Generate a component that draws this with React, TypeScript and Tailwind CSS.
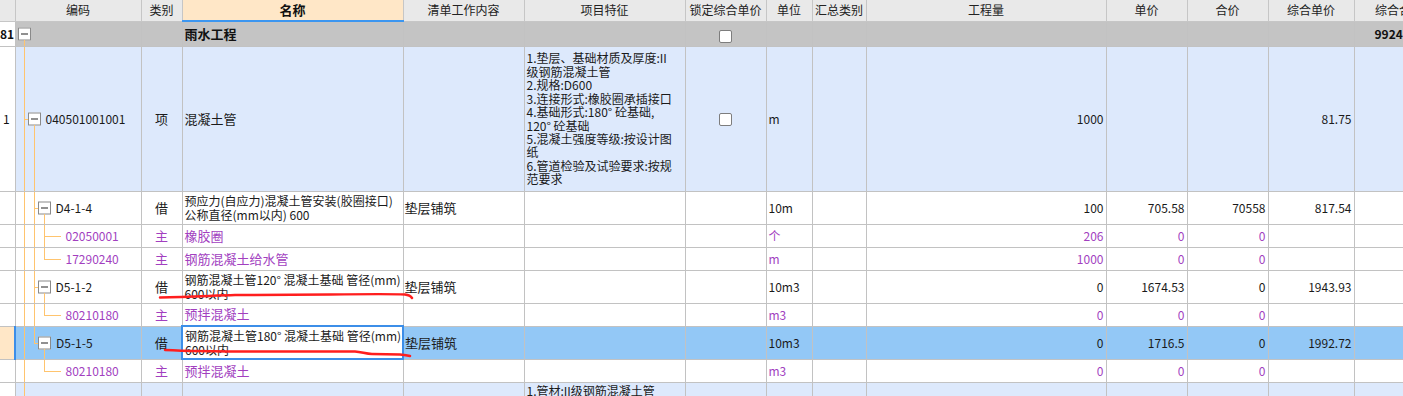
import React from "react";

const G = "border-r border-b border-[#c2c2c2]";
const PURPLE = "text-[#a23fbf]";

function VLine({ cls }: { cls: string }) {
  return <span className={"absolute w-px bg-[#ffc46e] " + cls} />;
}
function HLine({ cls }: { cls: string }) {
  return <span className={"absolute top-1/2 h-px bg-[#ffc46e] " + cls} />;
}
function Box({ cls }: { cls: string }) {
  return (
    <span
      className={
        "absolute top-1/2 -translate-y-1/2 w-[13px] h-[13px] border border-[#8a8a8a] bg-white flex items-center justify-center " +
        cls
      }
    >
      <span className="w-[7px] h-px bg-[#222]" />
    </span>
  );
}
function Check() {
  return <span className="inline-block w-[13px] h-[13px] border border-[#7d7d7d] bg-white rounded-[2px] align-middle" />;
}

function Header() {
  const h = "h-[21px] border-r border-b border-[#c6c6c6] bg-[#e9e9e9] text-[12px] leading-[14px] text-[#222] font-normal text-center whitespace-nowrap overflow-hidden p-0";
  return (
    <tr className="h-[21px]">
      <th className={h}></th>
      <th className={h}>编码</th>
      <th className={h}>类别</th>
      <th className="h-[21px] border-r border-[#c6c6c6] border-b-2 border-b-[#3c96f0] bg-[#ffe7c7] text-[13px] leading-[14px] text-[#111] font-bold text-center p-0">名称</th>
      <th className={h}>清单工作内容</th>
      <th className={h}>项目特征</th>
      <th className={h}>锁定综合单价</th>
      <th className={h}>单位</th>
      <th className={h}>汇总类别</th>
      <th className={h}>工程量</th>
      <th className={h}>单价</th>
      <th className={h}>合价</th>
      <th className={h}>综合单价</th>
      <th className={h}>综合合价</th>
    </tr>
  );
}

type RowProps = {
  h: string;
  bg: string;
  col0?: React.ReactNode;
  col0bg?: string;
  tree: React.ReactNode;
  code: React.ReactNode;
  codePad: string;
  kind?: string;
  name?: React.ReactNode;
  work?: string;
  feature?: React.ReactNode;
  lock?: boolean;
  unit?: string;
  qty?: string;
  price?: string;
  total?: string;
  uprice?: string;
  purple?: boolean;
  selected?: boolean;
};

function Row(p: RowProps) {
  const c = p.purple ? PURPLE : "text-[#1a1a1a]";
  const td = `${G} p-0 align-middle overflow-hidden whitespace-nowrap text-[12px] leading-[14px] ${c}`;
  return (
    <tr className={p.h}>
      <td className={`${G} p-0 align-middle overflow-hidden text-[12px] ${p.col0bg ?? "bg-white"}`}>{p.col0}</td>
      <td className={`${td} relative ${p.bg} ${p.selected ? "border-l-2 border-l-[#3c8ee8]" : ""}`}>
        {p.tree}
        <span className={`relative ${p.codePad}`}>{p.code}</span>
      </td>
      <td className={`${td} text-center text-[13px] ${p.bg}`}>{p.kind}</td>
      <td
        className={
          p.selected
            ? `p-0 align-middle overflow-hidden whitespace-nowrap text-[12px] leading-[14px] bg-white border-2 border-[#3c8ee8] ${c}`
            : `${td} ${p.bg}`
        }
      >
        <div className="pl-[2px]">{p.name}</div>
      </td>
      <td className={`${td} ${p.bg} text-[13px]`}>
        <div className="pl-[1px]">{p.work}</div>
      </td>
      <td className={`${td} ${p.bg}`}>
        <div className="pl-[2px]">{p.feature}</div>
      </td>
      <td className={`${td} ${p.bg} text-center`}>{p.lock ? <Check /> : null}</td>
      <td className={`${td} ${p.bg}`}>
        <div className="pl-[2px]">{p.unit}</div>
      </td>
      <td className={`${td} ${p.bg}`}></td>
      <td className={`${td} ${p.bg} text-right`}>
        <div className="pr-[2px]">{p.qty}</div>
      </td>
      <td className={`${td} ${p.bg} text-right`}>
        <div className="pr-[2px]">{p.price}</div>
      </td>
      <td className={`${td} ${p.bg} text-right`}>
        <div className="pr-[2px]">{p.total}</div>
      </td>
      <td className={`${td} ${p.bg} text-right`}>
        <div className="pr-[2px]">{p.uprice}</div>
      </td>
      <td className={`${td} ${p.bg}`}></td>
    </tr>
  );
}

const L1 = <VLine cls="left-[8px] top-0 bottom-0" />;
const L2 = <VLine cls="left-[18px] top-0 bottom-0" />;

export default function App() {
  const BLUE = "bg-[#dde9fc]";
  const W = "bg-white";
  const SEL = "bg-[#93c8f6]";
  const GR = `${G} p-0 bg-[#c4c4c4]`;
  return (
    <div className="relative w-[1403px] h-[396px] overflow-hidden bg-white font-['Noto_Sans_CJK_SC','Liberation_Sans',sans-serif]">
      <table className="table-fixed border-collapse w-[1444px]">
        <colgroup>
          <col className="w-[15px]" />
          <col className="w-[126px]" />
          <col className="w-[41px]" />
          <col className="w-[221px]" />
          <col className="w-[121px]" />
          <col className="w-[161px]" />
          <col className="w-[81px]" />
          <col className="w-[46px]" />
          <col className="w-[54px]" />
          <col className="w-[240px]" />
          <col className="w-[81px]" />
          <col className="w-[81px]" />
          <col className="w-[86px]" />
          <col className="w-[90px]" />
        </colgroup>
        <thead>
          <Header />
        </thead>
        <tbody>
          <tr className="h-[23px]">
            <td className={`${G} p-0 bg-white overflow-hidden`}>
              <div className="text-right pr-[3px] text-[12px] leading-[14px] font-bold text-[#111] whitespace-nowrap">81</div>
            </td>
            <td className={`${GR} relative`}>
              <Box cls="left-[2px]" />
              <VLine cls="left-[8px] top-[calc(50%+6px)] bottom-0" />
            </td>
            <td className={GR}></td>
            <td className={`${GR} text-[13px] leading-[14px] font-bold text-[#111]`}>
              <div className="pl-[2px]">雨水工程</div>
            </td>
            <td className={GR}></td>
            <td className={GR}></td>
            <td className={`${GR} text-center`}>
              <Check />
            </td>
            <td className={GR}></td>
            <td className={GR}></td>
            <td className={GR}></td>
            <td className={GR}></td>
            <td className={GR}></td>
            <td className={GR}></td>
            <td className={`${GR} overflow-hidden`}>
              <div className="pl-[20px] text-[12px] leading-[14px] font-bold text-[#111] whitespace-nowrap">9924</div>
            </td>
          </tr>

          <Row
            h="h-[145px]"
            bg={BLUE}
            col0={<div className="pl-[3px] text-[#111] leading-[14px]">1</div>}
            tree={
              <>
                {L1}
                <HLine cls="left-[8px] w-[5px]" />
                <Box cls="left-[12px]" />
                <VLine cls="left-[18px] top-[calc(50%+6px)] bottom-0" />
              </>
            }
            code="040501001001"
            codePad="pl-[30px]"
            kind="项"
            name={<span className="text-[13px]">混凝土管</span>}
            feature={
              <div className="leading-[13.4px]">
                <div>1.垫层、基础材质及厚度:II</div>
                <div>级钢筋混凝土管</div>
                <div>2.规格:D600</div>
                <div>3.连接形式:橡胶圈承插接口</div>
                <div>4.基础形式:180° 砼基础,</div>
                <div>120° 砼基础</div>
                <div>5.混凝土强度等级:按设计图</div>
                <div>纸</div>
                <div>6.管道检验及试验要求:按规</div>
                <div>范要求</div>
              </div>
            }
            lock
            unit="m"
            qty="1000"
            uprice="81.75"
          />

          <Row
            h="h-[33px]"
            bg={W}
            tree={
              <>
                {L1}
                {L2}
                <HLine cls="left-[18px] w-[5px]" />
                <Box cls="left-[22px]" />
                <VLine cls="left-[28px] top-[calc(50%+6px)] bottom-0" />
              </>
            }
            code="D4-1-4"
            codePad="pl-[40px]"
            kind="借"
            name={
              <>
                <div>预应力(自应力)混凝土管安装(胶圈接口)</div>
                <div>公称直径(mm以内) 600</div>
              </>
            }
            work="垫层铺筑"
            unit="10m"
            qty="100"
            price="705.58"
            total="70558"
            uprice="817.54"
          />

          <Row
            h="h-[23px]"
            bg={W}
            purple
            tree={
              <>
                {L1}
                {L2}
                <VLine cls="left-[28px] top-0 bottom-0" />
                <HLine cls="left-[28px] w-[17px]" />
              </>
            }
            code="02050001"
            codePad="pl-[50px]"
            kind="主"
            name={<span className="text-[13px]">橡胶圈</span>}
            unit="个"
            qty="206"
            price="0"
            total="0"
          />

          <Row
            h="h-[23px]"
            bg={W}
            purple
            tree={
              <>
                {L1}
                {L2}
                <VLine cls="left-[28px] top-0 bottom-1/2" />
                <HLine cls="left-[28px] w-[17px]" />
              </>
            }
            code="17290240"
            codePad="pl-[50px]"
            kind="主"
            name={<span className="text-[13px]">钢筋混凝土给水管</span>}
            unit="m"
            qty="1000"
            price="0"
            total="0"
          />

          <Row
            h="h-[33px]"
            bg={W}
            tree={
              <>
                {L1}
                {L2}
                <HLine cls="left-[18px] w-[5px]" />
                <Box cls="left-[22px]" />
                <VLine cls="left-[28px] top-[calc(50%+6px)] bottom-0" />
              </>
            }
            code="D5-1-2"
            codePad="pl-[40px]"
            kind="借"
            name={
              <>
                <div>钢筋混凝土管120° 混凝土基础 管径(mm)</div>
                <div>600以内</div>
              </>
            }
            work="垫层铺筑"
            unit="10m3"
            qty="0"
            price="1674.53"
            total="0"
            uprice="1943.93"
          />

          <Row
            h="h-[23px]"
            bg={W}
            purple
            tree={
              <>
                {L1}
                {L2}
                <VLine cls="left-[28px] top-0 bottom-1/2" />
                <HLine cls="left-[28px] w-[17px]" />
              </>
            }
            code="80210180"
            codePad="pl-[50px]"
            kind="主"
            name={<span className="text-[13px]">预拌混凝土</span>}
            unit="m3"
            qty="0"
            price="0"
            total="0"
          />

          <Row
            h="h-[33px]"
            bg={SEL}
            selected
            col0bg="bg-[#ffe7c7]"
            tree={
              <>
                {L1}
                <VLine cls="left-[18px] top-0 bottom-1/2" />
                <HLine cls="left-[18px] w-[5px]" />
                <Box cls="left-[22px]" />
                <VLine cls="left-[28px] top-[calc(50%+6px)] bottom-0" />
              </>
            }
            code="D5-1-5"
            codePad="pl-[40px]"
            kind="借"
            name={
              <>
                <div>钢筋混凝土管180° 混凝土基础 管径(mm)</div>
                <div>600以内</div>
              </>
            }
            work="垫层铺筑"
            unit="10m3"
            qty="0"
            price="1716.5"
            total="0"
            uprice="1992.72"
          />

          <Row
            h="h-[23px]"
            bg={W}
            purple
            tree={
              <>
                {L1}
                <VLine cls="left-[28px] top-0 bottom-1/2" />
                <HLine cls="left-[28px] w-[17px]" />
              </>
            }
            code="80210180"
            codePad="pl-[50px]"
            kind="主"
            name={<span className="text-[13px]">预拌混凝土</span>}
            unit="m3"
            qty="0"
            price="0"
            total="0"
          />

          <tr className="h-[145px]">
            <td className={`${G} p-0 bg-white`}></td>
            <td className={`${G} p-0 relative ${BLUE}`}>{L1}</td>
            <td className={`${G} p-0 ${BLUE}`}></td>
            <td className={`${G} p-0 ${BLUE}`}></td>
            <td className={`${G} p-0 ${BLUE}`}></td>
            <td className={`${G} p-0 align-top ${BLUE} text-[12px] leading-[14px] text-[#1a1a1a] whitespace-nowrap`}>
              <div className="pl-[2px] pt-[1px]">
                <div>1.管材:II级钢筋混凝土管</div>
                <div>2.规格:D600</div>
              </div>
            </td>
            <td className={`${G} p-0 ${BLUE}`}></td>
            <td className={`${G} p-0 ${BLUE}`}></td>
            <td className={`${G} p-0 ${BLUE}`}></td>
            <td className={`${G} p-0 ${BLUE}`}></td>
            <td className={`${G} p-0 ${BLUE}`}></td>
            <td className={`${G} p-0 ${BLUE}`}></td>
            <td className={`${G} p-0 ${BLUE}`}></td>
            <td className={`${G} p-0 ${BLUE}`}></td>
          </tr>
        </tbody>
      </table>

      <svg className="absolute left-0 top-0 pointer-events-none" width="1403" height="396">
        <path
          d="M160 297.5 C 190 297, 215 295.5, 235 295 L 330 294.5 C 370 294, 395 294, 405 294.5 C 409 295, 411 296.5, 412 298"
          fill="none"
          stroke="#ff1e1e"
          strokeWidth="2.5"
          strokeLinecap="round"
        />
        <path
          d="M165 350 C 185 351, 220 351.5, 260 351.5 L 355 351.5 C 362 352, 366 354, 372 354 L 400 354.5 C 405 355, 408 355.5, 410 356"
          fill="none"
          stroke="#ff1e1e"
          strokeWidth="2.5"
          strokeLinecap="round"
        />
      </svg>
    </div>
  );
}
